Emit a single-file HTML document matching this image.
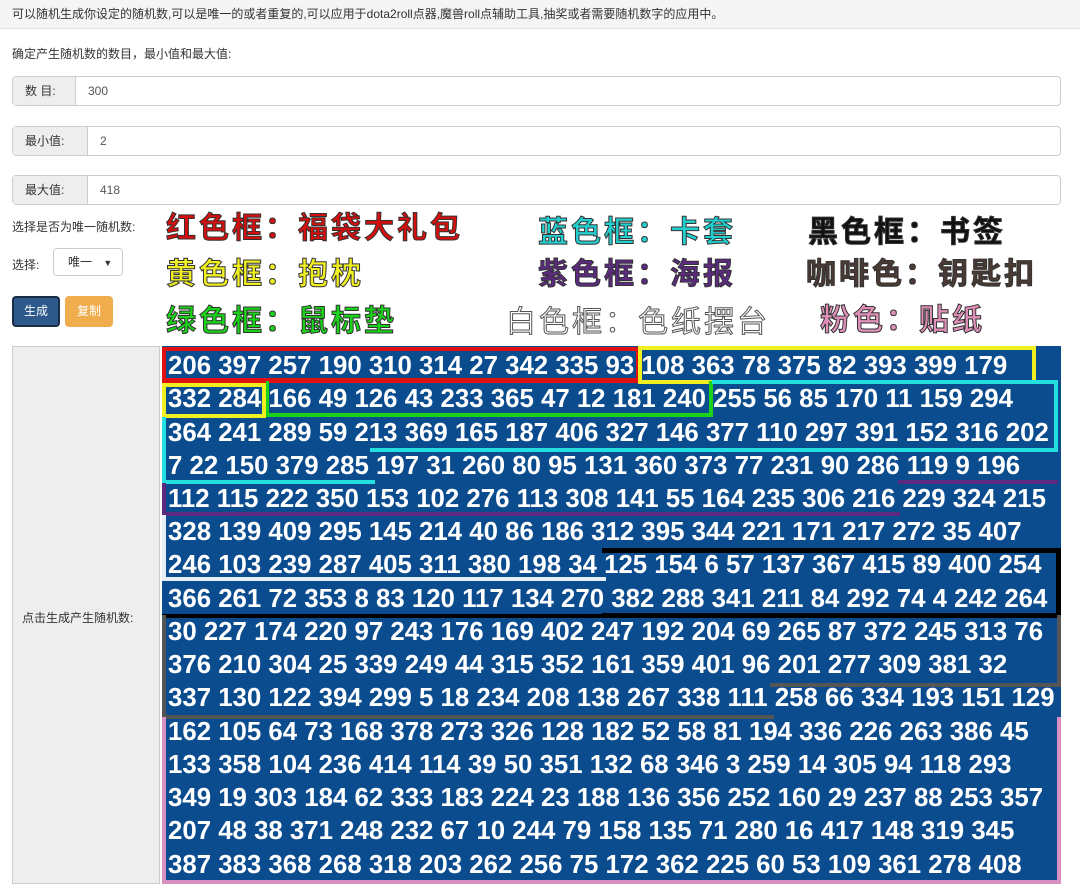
<!DOCTYPE html>
<html><head><meta charset="utf-8"><style>
body{margin:0;width:1080px;height:891px;background:#fff;font-family:"Liberation Sans","Noto Sans CJK SC",sans-serif;position:relative;overflow:hidden;color:#333}
.a{position:absolute}
.top{left:0;top:0;width:1080px;height:29px;background:#f5f5f5;border-bottom:1px solid #e3e3e3;font-size:12px;line-height:29px;padding-left:12px;box-sizing:border-box}
.ig{left:12px;width:1049px;height:30px;border:1px solid #ccc;border-radius:4px;box-sizing:border-box;font-size:12px;display:flex}
.ig .l{background:#eee;border-right:1px solid #ccc;line-height:28px;padding-left:12px;box-sizing:border-box}
.ig .v{line-height:28px;padding-left:12px;color:#555}
.lg{font-size:30px;font-weight:bold;-webkit-text-stroke:1px #333;white-space:nowrap;letter-spacing:3px}
.nums{left:162px;top:346px;width:899px;height:538px;background:#0b4c8f}
.row{position:absolute;left:6px;color:#fff;font-weight:bold;font-size:25.8px;line-height:33px;white-space:nowrap;font-family:"Liberation Sans",sans-serif}
.bx{position:absolute;box-sizing:border-box}
</style></head><body>
<div class="a top">可以随机生成你设定的随机数,可以是唯一的或者重复的,可以应用于dota2roll点器,魔兽roll点辅助工具,抽奖或者需要随机数字的应用中。</div>
<div class="a" style="left:12px;top:45px;font-size:12px">确定产生随机数的数目，最小值和最大值:</div>
<div class="a ig" style="top:76px"><div class="l" style="width:63px">数 目:</div><div class="v">300</div></div>
<div class="a ig" style="top:126px"><div class="l" style="width:75px">最小值:</div><div class="v">2</div></div>
<div class="a ig" style="top:175px"><div class="l" style="width:75px">最大值:</div><div class="v">418</div></div>
<div class="a" style="left:12px;top:218px;font-size:12px">选择是否为唯一随机数:</div>
<div class="a" style="left:12px;top:256px;font-size:12px">选择:</div>
<div class="a" style="left:53px;top:248px;width:70px;height:28px;border:1px solid #ccc;border-radius:4px;box-sizing:border-box;font-size:12px;line-height:26px;padding-left:14px">唯一 <span style="font-size:9px;margin-left:8px">▼</span></div>
<div class="a" style="left:12px;top:296px;width:48px;height:31px;background:#2d5a8a;border:2px solid #1a2d44;border-radius:4px;box-sizing:border-box;color:#fff;font-size:12px;line-height:27px;text-align:center">生成</div>
<div class="a" style="left:65px;top:296px;width:48px;height:31px;background:#f0ad4e;border-radius:4px;color:#fff;font-size:12px;line-height:31px;text-align:center">复制</div>
<div class="a lg" style="left:166px;top:203px;color:#d40f0f">红色框：福袋大礼包</div>
<div class="a lg" style="left:166px;top:249px;color:#f0f020">黄色框：抱枕</div>
<div class="a lg" style="left:166px;top:296px;color:#19d219">绿色框：鼠标垫</div>
<div class="a lg" style="left:538px;top:207px;color:#22d0d0">蓝色框：卡套</div>
<div class="a lg" style="left:538px;top:249px;color:#5c2a80">紫色框：海报</div>
<div class="a lg" style="left:506px;top:297px;color:#fff;-webkit-text-stroke:1px #555;font-weight:normal">白色框：色纸摆台</div>
<div class="a lg" style="left:808px;top:207px;color:#111">黑色框：书签</div>
<div class="a lg" style="left:806px;top:249px;color:#4a3a33">咖啡色：钥匙扣</div>
<div class="a lg" style="left:820px;top:295px;color:#e090b8">粉色：贴纸</div>
<div class="a" style="left:12px;top:346px;width:148px;height:538px;background:#eee;border:1px solid #ccc;box-sizing:border-box"></div>
<div class="a" style="left:22px;top:609px;font-size:12px">点击生成产生随机数:</div>
<div class="a nums">
<div class="row" style="top:4px">206 397 257 190 310 314 27 342 335 93 108 363 78 375 82 393 399 179</div>
<div class="row" style="top:37px">332 284 166 49 126 43 233 365 47 12 181 240 255 56 85 170 11 159 294</div>
<div class="row" style="top:71px">364 241 289 59 213 369 165 187 406 327 146 377 110 297 391 152 316 202</div>
<div class="row" style="top:104px">7 22 150 379 285 197 31 260 80 95 131 360 373 77 231 90 286 119 9 196</div>
<div class="row" style="top:137px">112 115 222 350 153 102 276 113 308 141 55 164 235 306 216 229 324 215</div>
<div class="row" style="top:170px">328 139 409 295 145 214 40 86 186 312 395 344 221 171 217 272 35 407</div>
<div class="row" style="top:203px">246 103 239 287 405 311 380 198 34 125 154 6 57 137 367 415 89 400 254</div>
<div class="row" style="top:237px">366 261 72 353 8 83 120 117 134 270 382 288 341 211 84 292 74 4 242 264</div>
<div class="row" style="top:270px">30 227 174 220 97 243 176 169 402 247 192 204 69 265 87 372 245 313 76</div>
<div class="row" style="top:303px">376 210 304 25 339 249 44 315 352 161 359 401 96 201 277 309 381 32</div>
<div class="row" style="top:336px">337 130 122 394 299 5 18 234 208 138 267 338 111 258 66 334 193 151 129</div>
<div class="row" style="top:370px">162 105 64 73 168 378 273 326 128 182 52 58 81 194 336 226 263 386 45</div>
<div class="row" style="top:403px">133 358 104 236 414 114 39 50 351 132 68 346 3 259 14 305 94 118 293</div>
<div class="row" style="top:436px">349 19 303 184 62 333 183 224 23 188 136 356 252 160 29 237 88 253 357</div>
<div class="row" style="top:469px">207 48 38 371 248 232 67 10 244 79 158 135 71 280 16 417 148 319 345</div>
<div class="row" style="top:503px">387 383 368 268 318 203 262 256 75 172 362 225 60 53 109 361 278 408</div>
<div class="bx" style="left:0;top:1px;width:478px;height:36px;border:4px solid #e01010;border-bottom-width:5px"></div>
<div class="bx" style="left:476px;top:0;width:398px;height:38px;border:4px solid #f0f020"></div>
<div class="bx" style="left:0;top:37px;width:104px;height:35px;border:4px solid #f0f020"></div>
<div class="bx" style="left:104px;top:35px;width:447px;height:36px;border-bottom:4px solid #19d219;border-right:4px solid #19d219;border-left:3px solid #19d219"></div>
<div class="bx" style="left:550px;top:34px;width:346px;height:38px;border:4px solid #22e0e0;border-bottom:none;border-left:none"></div>
<div class="bx" style="left:0;top:71px;width:896px;height:34px;border:4px solid #22e0e0;border-bottom:none;border-top:none"></div>
<div class="bx" style="left:0;top:102px;width:213px;height:36px;border:4px solid #22e0e0;border-top:none;border-right:none"></div>
<div class="bx" style="left:208px;top:102px;width:688px;height:4px;background:#22e0e0"></div>
<div class="bx" style="left:0;top:137px;width:738px;height:33px;border:4px solid #5c2a80;border-top:none;border-right:none"></div>
<div class="bx" style="left:736px;top:134px;width:160px;height:4px;background:#5c2a80"></div>
<div class="bx" style="left:0;top:169px;width:444px;height:66px;border:4px solid #e8eef6;border-top:none;border-right:none"></div>
<div class="bx" style="left:440px;top:202px;width:459px;height:70px;border:5px solid #000;border-left:none"></div>
<div class="bx" style="left:0;top:235px;width:444px;height:37px;border-bottom:4px solid #000"></div>
<div class="bx" style="left:0;top:269px;width:612px;height:104px;border:4px solid #555;border-top:none;border-right:none"></div>
<div class="bx" style="left:608px;top:269px;width:291px;height:72px;border:4px solid #555;border-top:none;border-left:none"></div>
<div class="bx" style="left:0;top:371px;width:899px;height:167px;border:4px solid #d890c0;border-top:none"></div>
</div>
</body></html>
